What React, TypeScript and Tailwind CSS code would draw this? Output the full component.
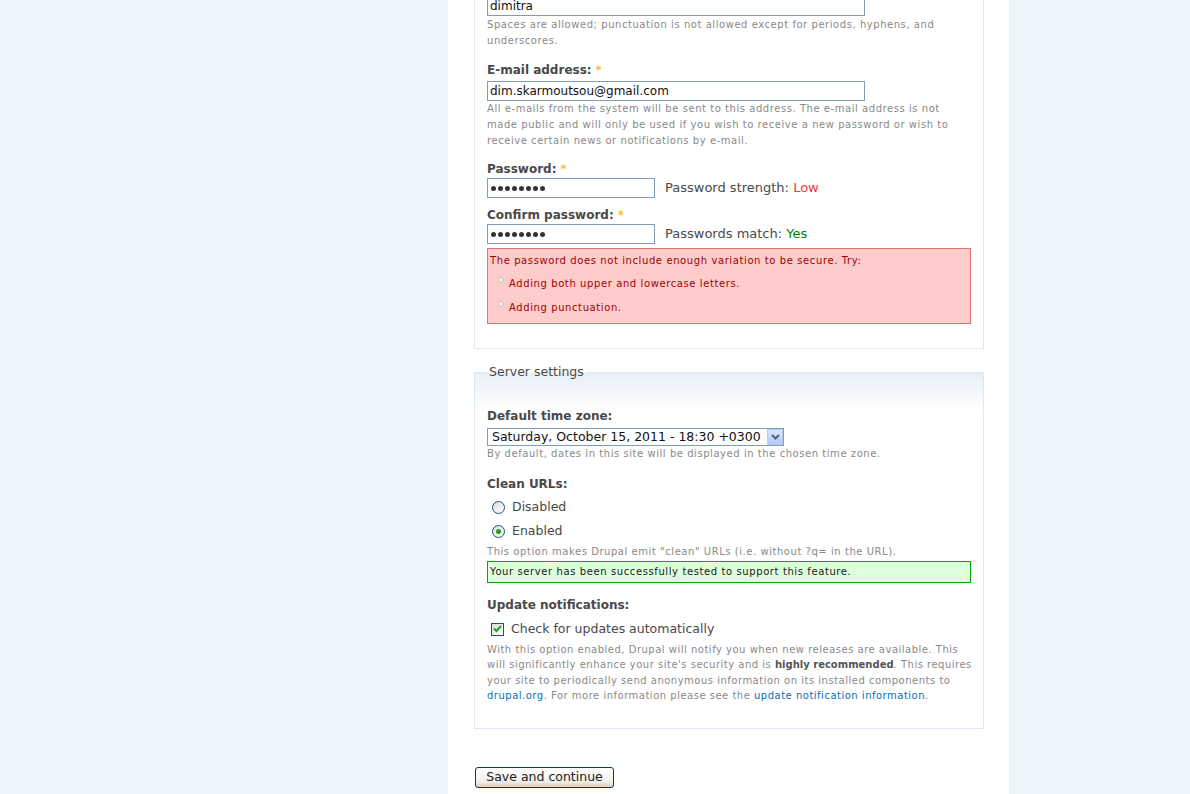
import React from 'react'

const font = { fontFamily: '"DejaVu Sans", Verdana, sans-serif' }

function Req() {
  return <span className="ml-[4px] font-normal text-[#ffae00]">*</span>
}

function Label({ children, required }: { children: React.ReactNode; required?: boolean }) {
  return (
    <div className="h-[16px] text-[12px] leading-[16px] font-bold text-[#494949]">
      {children}
      {required && <Req />}
    </div>
  )
}

// description text, one entry per rendered line
function Desc({
  lines,
  className = '',
  leading = 'leading-[16px]',
  tracking = 'tracking-[0.55px]',
}: {
  lines: React.ReactNode[]
  className?: string
  leading?: string
  tracking?: string
}) {
  return (
    <div className={`text-[10px] ${tracking} ${leading} text-[#898989] ${className}`}>
      {lines.map((l, i) => (
        <div key={i} className="whitespace-nowrap">{l}</div>
      ))}
    </div>
  )
}

function TextBox({ value, width }: { value: string; width: string }) {
  return (
    <div className={`h-[20px] ${width} border border-[#7f9db9] bg-white px-[2px] text-[12px] leading-[18px] text-[#111]`}>
      {value}
    </div>
  )
}

function PasswordBox() {
  return (
    <div className="h-[20px] w-[168px] border border-[#7f9db9] bg-white px-[3px] flex items-center gap-[2px]">
      {Array.from({ length: 8 }).map((_, i) => (
        <span key={i} className="w-[5px] h-[5px] rounded-full bg-[#333]" />
      ))}
    </div>
  )
}

function Radio({ checked }: { checked?: boolean }) {
  return (
    <span className="w-[13px] h-[13px] rounded-full border border-[#1c5180] bg-[linear-gradient(135deg,#dcdcd7,#ffffff)] flex items-center justify-center">
      {checked && <span className="w-[5px] h-[5px] rounded-full bg-[#21a121]" />}
    </span>
  )
}

function Bullet() {
  return <span className="w-[6px] h-[6px] rounded-full border border-[#c9c9c9] bg-[radial-gradient(circle_at_40%_40%,#ffffff,#d7d7d7)] mt-[-6px]" />
}

export default function App() {
  return (
    <div className="min-h-screen bg-[#edf5fa] flex" style={font}>
      <div className="ml-[448px] w-[561px] bg-white pl-[26px] pr-[25px] min-h-screen">
        {/* Administrator account */}
        <div className="mt-[-4px] border border-t-0 border-[#dbe8f3] px-[12px] pb-[24px]">
          <TextBox value="dimitra" width="w-[378px]" />
          <Desc
            className="mt-[1px]"
            lines={[
              'Spaces are allowed; punctuation is not allowed except for periods, hyphens, and',
              'underscores.',
            ]}
          />

          <div className="mt-[13px]">
            <Label required>E-mail address:</Label>
            <div className="mt-[3px]">
              <TextBox value="dim.skarmoutsou@gmail.com" width="w-[378px]" />
            </div>
            <Desc
              lines={[
                'All e-mails from the system will be sent to this address. The e-mail address is not',
                'made public and will only be used if you wish to receive a new password or wish to',
                'receive certain news or notifications by e-mail.',
              ]}
            />
          </div>

          <div className="mt-[12px]">
            <Label required>Password:</Label>
            <div className="mt-[1px] flex items-center">
              <PasswordBox />
              <span className="ml-[10px] text-[13px] text-[#494949]">
                Password strength: <span className="text-[#e73b3b]">Low</span>
              </span>
            </div>
          </div>

          <div className="mt-[9px]">
            <Label required>Confirm password:</Label>
            <div className="mt-[1px] flex items-center">
              <PasswordBox />
              <span className="ml-[10px] text-[13px] text-[#494949]">
                Passwords match: <span className="text-[#008000]">Yes</span>
              </span>
            </div>
          </div>

          <div className="mt-[4px] h-[76px] border border-[#dd7777] bg-[#ffcccc] px-[2px] pt-[4px] text-[10px] tracking-[0.6px] text-[#a30000]">
            <div className="leading-[16px]">The password does not include enough variation to be secure. Try:</div>
            <ul className="mt-[2px] pl-[8px]">
              <li className="flex items-center gap-[5px] h-[24px]">
                <Bullet />
                <span>Adding both upper and lowercase letters.</span>
              </li>
              <li className="flex items-center gap-[5px] h-[24px]">
                <Bullet />
                <span>Adding punctuation.</span>
              </li>
            </ul>
          </div>
        </div>

        {/* Server settings */}
        <fieldset className="mt-[15px] min-w-0 border border-[#dbe8f3] px-[12px] pb-[24px] bg-[linear-gradient(180deg,#e6eff8_0px,#ffffff_36px)]">
          <legend className="px-[2px] text-[12.5px] leading-[16px] text-[#494949]">Server settings</legend>

          <div className="mt-[28px]">
            <Label>Default time zone:</Label>
            <div className="mt-[4px] h-[18px] w-[297px] border border-[#7f9db9] bg-white flex items-center justify-between">
              <span className="pl-[4px] text-[12.5px] leading-[16px] text-[#111]">
                Saturday, October 15, 2011 - 18:30 +0300
              </span>
              <span className="w-[16px] h-[16px] border border-[#b7caf5] bg-[linear-gradient(180deg,#dde7fd,#b4c8f5)] flex items-center justify-center">
                <svg width="9" height="6" viewBox="0 0 9 6">
                  <path d="M1 1 L4.5 4.5 L8 1" fill="none" stroke="#4d6185" strokeWidth="2" />
                </svg>
              </span>
            </div>
            <Desc lines={['By default, dates in this site will be displayed in the chosen time zone.']} />
          </div>

          <div className="mt-[14px]">
            <Label>Clean URLs:</Label>
            <div className="mt-[7px] flex flex-col gap-[8px] pl-[5px]">
              <label className="flex items-center gap-[7px] h-[16px] text-[12.5px] text-[#494949]">
                <Radio />
                Disabled
              </label>
              <label className="flex items-center gap-[7px] h-[16px] text-[12.5px] text-[#494949]">
                <Radio checked />
                Enabled
              </label>
            </div>
            <Desc
              className="mt-[5px]"
              lines={['This option makes Drupal emit "clean" URLs (i.e. without ?q= in the URL).']}
            />
            <div className="mt-[1px] h-[22px] border border-[#00aa00] bg-[#ddffdd] px-[2px] text-[10px] tracking-[0.6px] leading-[20px] text-[#1a1a1a]">
              Your server has been successfully tested to support this feature.
            </div>
          </div>

          <div className="mt-[14px]">
            <Label>Update notifications:</Label>
            <label className="mt-[8px] pl-[4px] flex items-center gap-[7px] h-[16px] text-[12.5px] text-[#494949]">
              <span className="w-[13px] h-[13px] border border-[#1c5180] bg-[linear-gradient(135deg,#dcdcd7,#ffffff)] flex items-center justify-center">
                <svg width="9" height="8" viewBox="0 0 9 8">
                  <path d="M1 3.5 L3.5 6 L8 1" fill="none" stroke="#21a121" strokeWidth="2" />
                </svg>
              </span>
              Check for updates automatically
            </label>
            <Desc
              className="mt-[5px]"
              leading="leading-[15.4px]"
              tracking="tracking-[0.5px]"
              lines={[
                'With this option enabled, Drupal will notify you when new releases are available. This',
                <>
                  will significantly enhance your site&apos;s security and is{' '}
                  <b className="tracking-normal text-[#555]">highly recommended</b>. This requires
                </>,
                'your site to periodically send anonymous information on its installed components to',
                <>
                  <a className="text-[#0a6fb5]">drupal.org</a>. For more information please see the{' '}
                  <a className="text-[#0a6fb5]">update notification information</a>.
                </>,
              ]}
            />
          </div>
        </fieldset>

        <div className="mt-[35px] pl-[1px]">
          <button className="h-[21px] w-[139px] rounded-[3px] border border-[#003c74] bg-[linear-gradient(180deg,#ffffff,#f0f0ea_70%,#d6d0c5)] text-[12.5px] text-[#222]">
            Save and continue
          </button>
        </div>
      </div>
    </div>
  )
}
